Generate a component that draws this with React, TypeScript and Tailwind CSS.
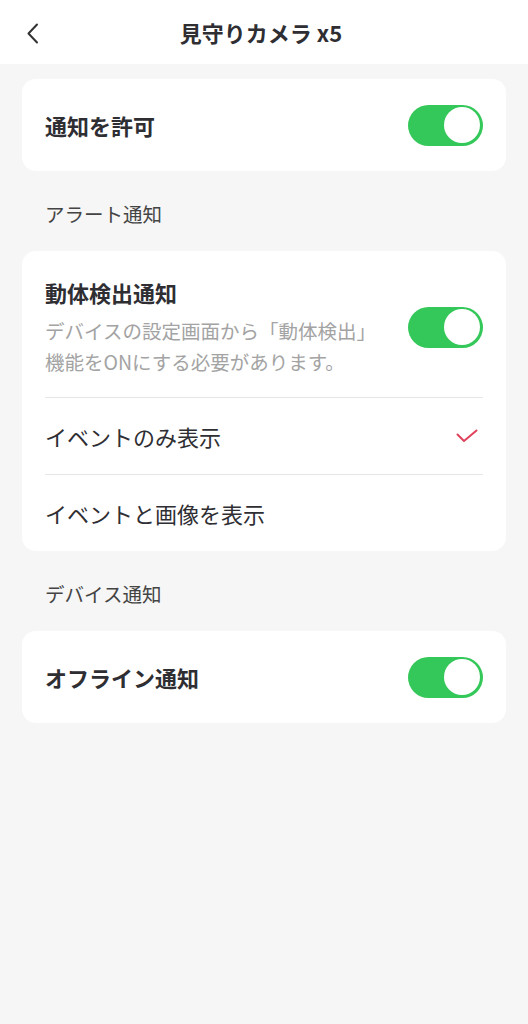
import React from "react";

const Toggle = () => (
  <div className="relative w-[75px] h-[41px] rounded-full bg-[#34c759] shrink-0">
    <div className="absolute right-[3px] top-[2.5px] w-[36px] h-[36px] rounded-full bg-white" />
  </div>
);

export default function App() {
  return (
    <div
      className="min-h-[1024px] w-full bg-[#f6f6f6] text-[#2e2e33]"
      style={{ fontFamily: '"Noto Sans CJK JP", "Noto Sans", sans-serif' }}
    >
      <div className="relative h-[64px] bg-white flex items-center justify-center">
        <svg
          className="absolute left-[26px] top-[23px]"
          width="14"
          height="21"
          viewBox="0 0 14 21"
          fill="none"
        >
          <path d="M11 1.5 L2.5 10.5 L11 19.5" stroke="#333" strokeWidth="2" strokeLinecap="round" strokeLinejoin="round" />
        </svg>
        <div className="text-[22px] font-bold leading-[30px] mr-[6px]">見守りカメラ x5</div>
      </div>

      <div className="px-[22px] pt-[15px]">
        <div className="bg-white rounded-[14px] h-[92px] px-[23px] flex items-center justify-between">
          <div className="text-[22px] font-semibold leading-[30px]">通知を許可</div>
          <Toggle />
        </div>

        <div className="pl-[23px] pt-[28px] pb-[22px] text-[19.5px] leading-[30px] text-[#444]">アラート通知</div>

        <div className="bg-white rounded-[14px] px-[23px]">
          <div className="flex items-center justify-between pt-[26px] pb-[20px]">
            <div>
              <div className="text-[22px] font-bold leading-[30px]">動体検出通知</div>
              <div className="mt-[8px] text-[19.5px] leading-[31px] text-[#a3a3a3]">
                デバイスの設定画面から「動体検出」
                <br />
                機能をONにする必要があります。
              </div>
            </div>
            <Toggle />
          </div>
          <div className="h-px bg-[#e6e6e6]" />
          <div className="h-[76px] flex items-center justify-between">
            <div className="text-[22px] leading-[30px]">イベントのみ表示</div>
            <svg width="22" height="14" viewBox="0 0 22 14" fill="none" className="mr-[5px]">
              <path d="M1.5 5.5 L8 12 L20.5 1.5" stroke="#e0425c" strokeWidth="2" strokeLinecap="round" strokeLinejoin="round" />
            </svg>
          </div>
          <div className="h-px bg-[#e6e6e6]" />
          <div className="h-[76px] flex items-center">
            <div className="text-[22px] leading-[30px]">イベントと画像を表示</div>
          </div>
        </div>

        <div className="pl-[23px] pt-[28px] pb-[22px] text-[19.5px] leading-[30px] text-[#444]">デバイス通知</div>

        <div className="bg-white rounded-[14px] h-[92px] px-[23px] flex items-center justify-between">
          <div className="text-[22px] font-semibold leading-[30px]">オフライン通知</div>
          <Toggle />
        </div>
      </div>
    </div>
  );
}
